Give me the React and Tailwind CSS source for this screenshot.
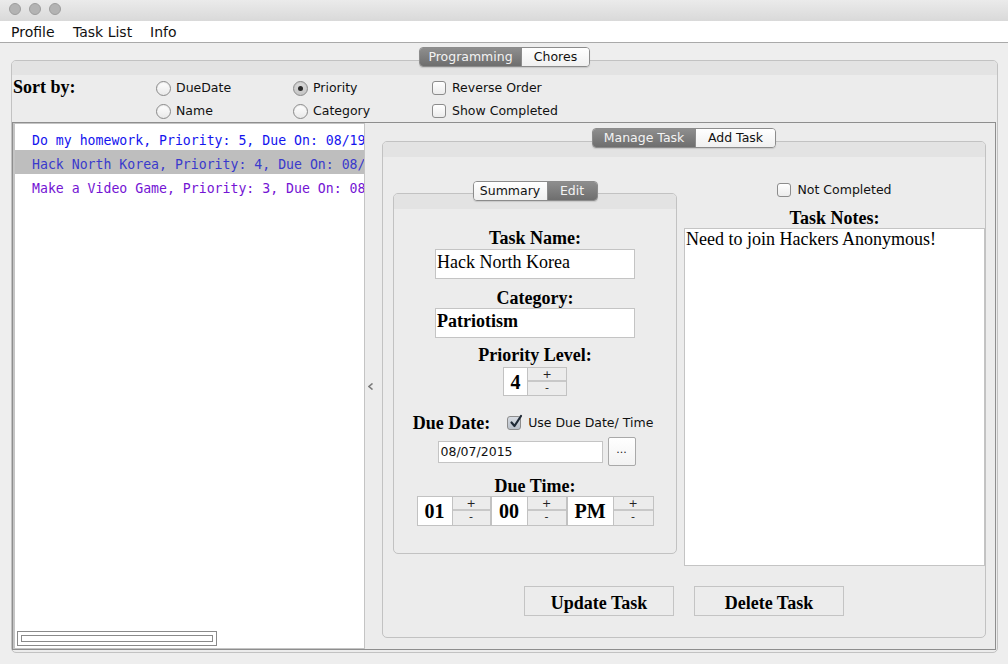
import React from "react";

const SERIF = "font-['Liberation_Serif',serif]";

function Tabs({ items, active, widths }) {
  return (
    <div className="relative z-10 flex justify-center">
      <div className="flex h-[20px] rounded-[4px] border border-[#8c8c8c] overflow-hidden shadow-[0_1px_1px_rgba(0,0,0,0.12)]">
        {items.map((t, i) => (
          <div
            key={t}
            className={
              (i === active
                ? "bg-linear-to-b from-[#8e8e8e] to-[#6e6e6e] text-[#f3f3f3] "
                : "bg-linear-to-b from-white to-[#f0f0f0] text-[#111] ") +
              (i > 0 ? "border-l border-[#8c8c8c] " : "") +
              widths[i] +
              " flex items-center justify-center text-[12.5px] leading-[18px]"
            }
          >
            {t}
          </div>
        ))}
      </div>
    </div>
  );
}

function Radio({ checked }) {
  return (
    <span
      className={
        "w-[15px] h-[15px] rounded-full border border-[#8a8a8a] flex items-center justify-center shrink-0 shadow-[inset_0_1px_1px_rgba(0,0,0,0.08)] " +
        (checked
          ? "bg-linear-to-b from-[#dcdcdc] to-[#c4c4c4]"
          : "bg-linear-to-b from-white to-[#e9e9e9]")
      }
    >
      {checked && <span className="w-[5px] h-[5px] rounded-full bg-[#2a2a2a]" />}
    </span>
  );
}

function Check({ checked }) {
  return (
    <span
      className={
        "relative block w-[14px] h-[14px] rounded-[3px] border border-[#8c8c8c] shrink-0 " +
        (checked
          ? "bg-linear-to-b from-[#d6dbe2] to-[#b9c0c9]"
          : "bg-linear-to-b from-white to-[#ececec]")
      }
    >
      {checked && (
        <svg
          className="absolute left-[1px] top-[-3px]"
          width="14"
          height="15"
          viewBox="0 0 14 15"
        >
          <path
            d="M2.5 8.5 L5.5 12 L12 2"
            fill="none"
            stroke="#1f2a36"
            strokeWidth="2.2"
            strokeLinecap="round"
            strokeLinejoin="round"
          />
        </svg>
      )}
    </span>
  );
}

function SpinBtns({ w }) {
  return (
    <div className={w + " h-full flex flex-col border border-l-0 border-[#c2c2c2] bg-[#ececec] text-[11px] leading-none text-[#222]"}>
      <div className="flex-1 flex items-start justify-center pt-[1px] border-b-2 border-[#c8c8c8]">+</div>
      <div className="flex-1 flex items-end justify-center pb-[3px]">-</div>
    </div>
  );
}

function ValBox({ w, children, size }) {
  return (
    <div className={w + " h-full bg-white border border-[#c2c2c2] flex items-center justify-center font-bold " + SERIF + " " + size}>
      {children}
    </div>
  );
}

function Label({ children, cls }) {
  return (
    <div className={"text-[18px] leading-[20px] font-bold " + SERIF + " " + (cls || "")}>{children}</div>
  );
}

export default function App() {
  return (
    <div className="w-[1008px] h-[664px] bg-[#eeeeee] overflow-hidden flex flex-col font-['DejaVu_Sans',sans-serif] text-black">
      {/* title bar */}
      <div className="h-[21px] shrink-0 bg-linear-to-b from-[#ebebeb] to-[#d9d9d9] flex items-start pt-[3px] pl-[9px] gap-[8px]">
        <span className="w-[12px] h-[12px] rounded-full bg-[#b3b3b3] border border-[#9d9d9d]" />
        <span className="w-[12px] h-[12px] rounded-full bg-[#b3b3b3] border border-[#9d9d9d]" />
        <span className="w-[12px] h-[12px] rounded-full bg-[#b3b3b3] border border-[#9d9d9d]" />
      </div>

      {/* menu bar */}
      <div className="h-[22px] shrink-0 bg-white border-b border-[#a9a9a9] flex pl-[11px] pt-[1px] text-[14px] leading-[21px] text-[#111]">
        <span className="w-[62px]">Profile</span>
        <span className="w-[77px]">Task List</span>
        <span>Info</span>
      </div>

      {/* main */}
      <div className="pl-[11px] pt-[4px]">
        <div className="w-[987px] mb-[-7px]">
          <Tabs items={["Programming", "Chores"]} active={0} widths={["w-[101px]", "w-[68px]"]} />
        </div>
        <div className="w-[987px] h-[593px] border border-[#c2c2c2] rounded-[5px] bg-[#ececec] flex flex-col">
          <div className="h-[14px] bg-[#e3e3e3] rounded-t-[4px]" />

          {/* sort row */}
          <div className="h-[47px] flex pl-[1px] pt-[2px]">
            <Label cls="w-[143px]">Sort by:</Label>
            <div className="grid grid-cols-[137px_138px_200px] grid-rows-[22px_22px] gap-y-[1px] text-[12.5px] text-[#111]">
              <div className="flex items-center gap-[5px]"><Radio /><span>DueDate</span></div>
              <div className="flex items-center gap-[5px]"><Radio checked /><span>Priority</span></div>
              <div className="flex items-center gap-[6px] pl-[1px]"><Check /><span>Reverse Order</span></div>
              <div className="flex items-center gap-[5px]"><Radio /><span>Name</span></div>
              <div className="flex items-center gap-[5px]"><Radio /><span>Category</span></div>
              <div className="flex items-center gap-[6px] pl-[1px]"><Check /><span>Show Completed</span></div>
            </div>
          </div>

          {/* split pane */}
          <div className="w-[984px] h-[528px] border border-[#8e8e8e] flex">
            {/* list */}
            <div className="w-[352px] h-full bg-white border-l-2 border-t border-r border-b border-[#c4c4c4] flex flex-col font-['DejaVu_Sans_Mono',monospace] text-[13.2px] leading-[16px]">
              <div className="pt-[2px]">
                <div className="h-[24px] pl-[17px] pt-[7px] whitespace-nowrap overflow-hidden text-[#1414ee]">
                  Do my homework, Priority: 5, Due On: 08/19/2015
                </div>
                <div className="h-[24px] pl-[17px] pt-[7px] whitespace-nowrap overflow-hidden bg-[#bebebe] text-[#3a3acc]">
                  Hack North Korea, Priority: 4, Due On: 08/07/2015
                </div>
                <div className="h-[24px] pl-[17px] pt-[7px] whitespace-nowrap overflow-hidden text-[#7414d4]">
                  Make a Video Game, Priority: 3, Due On: 08/25/2015
                </div>
              </div>
              <div className="flex-1" />
              <div className="ml-[2px] mb-[2px] w-[200px] h-[15px] border border-[#8a8a8a] p-[3px]">
                <div className="h-full border border-[#8a8a8a]" />
              </div>
            </div>

            {/* divider */}
            <div className="w-[17px] h-full flex items-center pl-[3px]">
              <svg width="6" height="7" viewBox="0 0 6 7">
                <path d="M4.5 0.5 L1 3.5 L4.5 6.5" fill="none" stroke="#7a7a7a" strokeWidth="1.6" />
              </svg>
            </div>

            {/* right pane */}
            <div className="w-[613px] h-full flex flex-col pt-[5px]">
              <div className="w-[604px] mb-[-7px]">
                <Tabs items={["Manage Task", "Add Task"]} active={0} widths={["w-[102px]", "w-[80px]"]} />
              </div>
              <div className="w-[604px] h-[497px] border border-[#c2c2c2] rounded-[5px] bg-[#ececec] flex flex-col">
                <div className="h-[15px] bg-[#e3e3e3] rounded-t-[4px]" />
                <div className="flex pl-[10px]">
                  {/* left column */}
                  <div className="w-[284px] pt-[24px]">
                    <div className="mb-[-8px]">
                      <Tabs items={["Summary", "Edit"]} active={1} widths={["w-[73px]", "w-[50px]"]} />
                    </div>
                    <div className="w-[284px] h-[361px] border border-[#c2c2c2] rounded-[5px] bg-[#ececec] flex flex-col items-center">
                      <div className="h-[15px] w-full bg-[#e3e3e3] rounded-t-[4px] shrink-0" />
                      <Label cls="mt-[19px]">Task Name:</Label>
                      <div className={"mt-[1px] w-[200px] h-[30px] bg-white border border-[#c4c4c4] pl-[1px] pt-[2px] text-[18px] leading-[20px] " + SERIF}>
                        Hack North Korea
                      </div>
                      <Label cls="mt-[9px]">Category:</Label>
                      <div className={"w-[200px] h-[30px] bg-white border border-[#c4c4c4] pl-[1px] pt-[2px] text-[18px] leading-[20px] font-bold " + SERIF}>
                        Patriotism
                      </div>
                      <Label cls="mt-[7px]">Priority Level:</Label>
                      <div className="mt-[2px] h-[29px] flex">
                        <ValBox w="w-[25px]" size="text-[20px]">4</ValBox>
                        <SpinBtns w="w-[39px]" />
                      </div>
                      <div className="mt-[17px] h-[20px] flex items-center pr-[4px]">
                        <Label>Due Date:</Label>
                        <span className="ml-[17px] block"><Check checked /></span>
                        <span className="ml-[7px] text-[12.5px] text-[#111]">Use Due Date/ Time</span>
                      </div>
                      <div className="mt-[4px] h-[29px] flex items-center gap-[5px] pl-[3px]">
                        <div className="w-[165px] h-[22px] bg-white border border-[#c4c4c4] pl-[2px] text-[12.5px] leading-[20px] text-[#111]">
                          08/07/2015
                        </div>
                        <div className="w-[28px] h-[29px] rounded-[2px] border border-[#a9a9a9] bg-linear-to-b from-white to-[#f2f2f2] flex items-center justify-center text-[11px] pb-[2px] text-[#222]">
                          ...
                        </div>
                      </div>
                      <Label cls="mt-[10px]">Due Time:</Label>
                      <div className="h-[30px] flex">
                        <ValBox w="w-[36px]" size="text-[20px]">01</ValBox>
                        <SpinBtns w="w-[38px]" />
                        <ValBox w="w-[37px]" size="text-[20px]">00</ValBox>
                        <SpinBtns w="w-[39px]" />
                        <ValBox w="w-[47px]" size="text-[20px]">PM</ValBox>
                        <SpinBtns w="w-[40px]" />
                      </div>
                    </div>
                  </div>

                  {/* right column */}
                  <div className="w-[301px] ml-[7px] pt-[26px] flex flex-col items-center">
                    <div className="h-[14px] flex items-center gap-[6px] text-[12.5px] text-[#111]">
                      <Check />
                      <span>Not Completed</span>
                    </div>
                    <Label cls="mt-[11px]">Task Notes:</Label>
                    <div className={"w-[301px] h-[338px] bg-white border border-[#c4c4c4] pl-[1px] text-[18px] leading-[20px] " + SERIF}>
                      Need to join Hackers Anonymous!
                    </div>
                  </div>
                </div>

                {/* buttons */}
                <div className="mt-[20px] flex justify-center gap-[20px]">
                  <div className={"w-[150px] h-[30px] border border-[#c4c4c4] bg-[#ececec] flex items-center justify-center text-[18px] font-bold pt-[4px] " + SERIF}>
                    Update Task
                  </div>
                  <div className={"w-[150px] h-[30px] border border-[#c4c4c4] bg-[#ececec] flex items-center justify-center text-[18px] font-bold pt-[4px] " + SERIF}>
                    Delete Task
                  </div>
                </div>
              </div>
            </div>
          </div>
          <div className="h-[2px]" />
        </div>
      </div>
    </div>
  );
}
